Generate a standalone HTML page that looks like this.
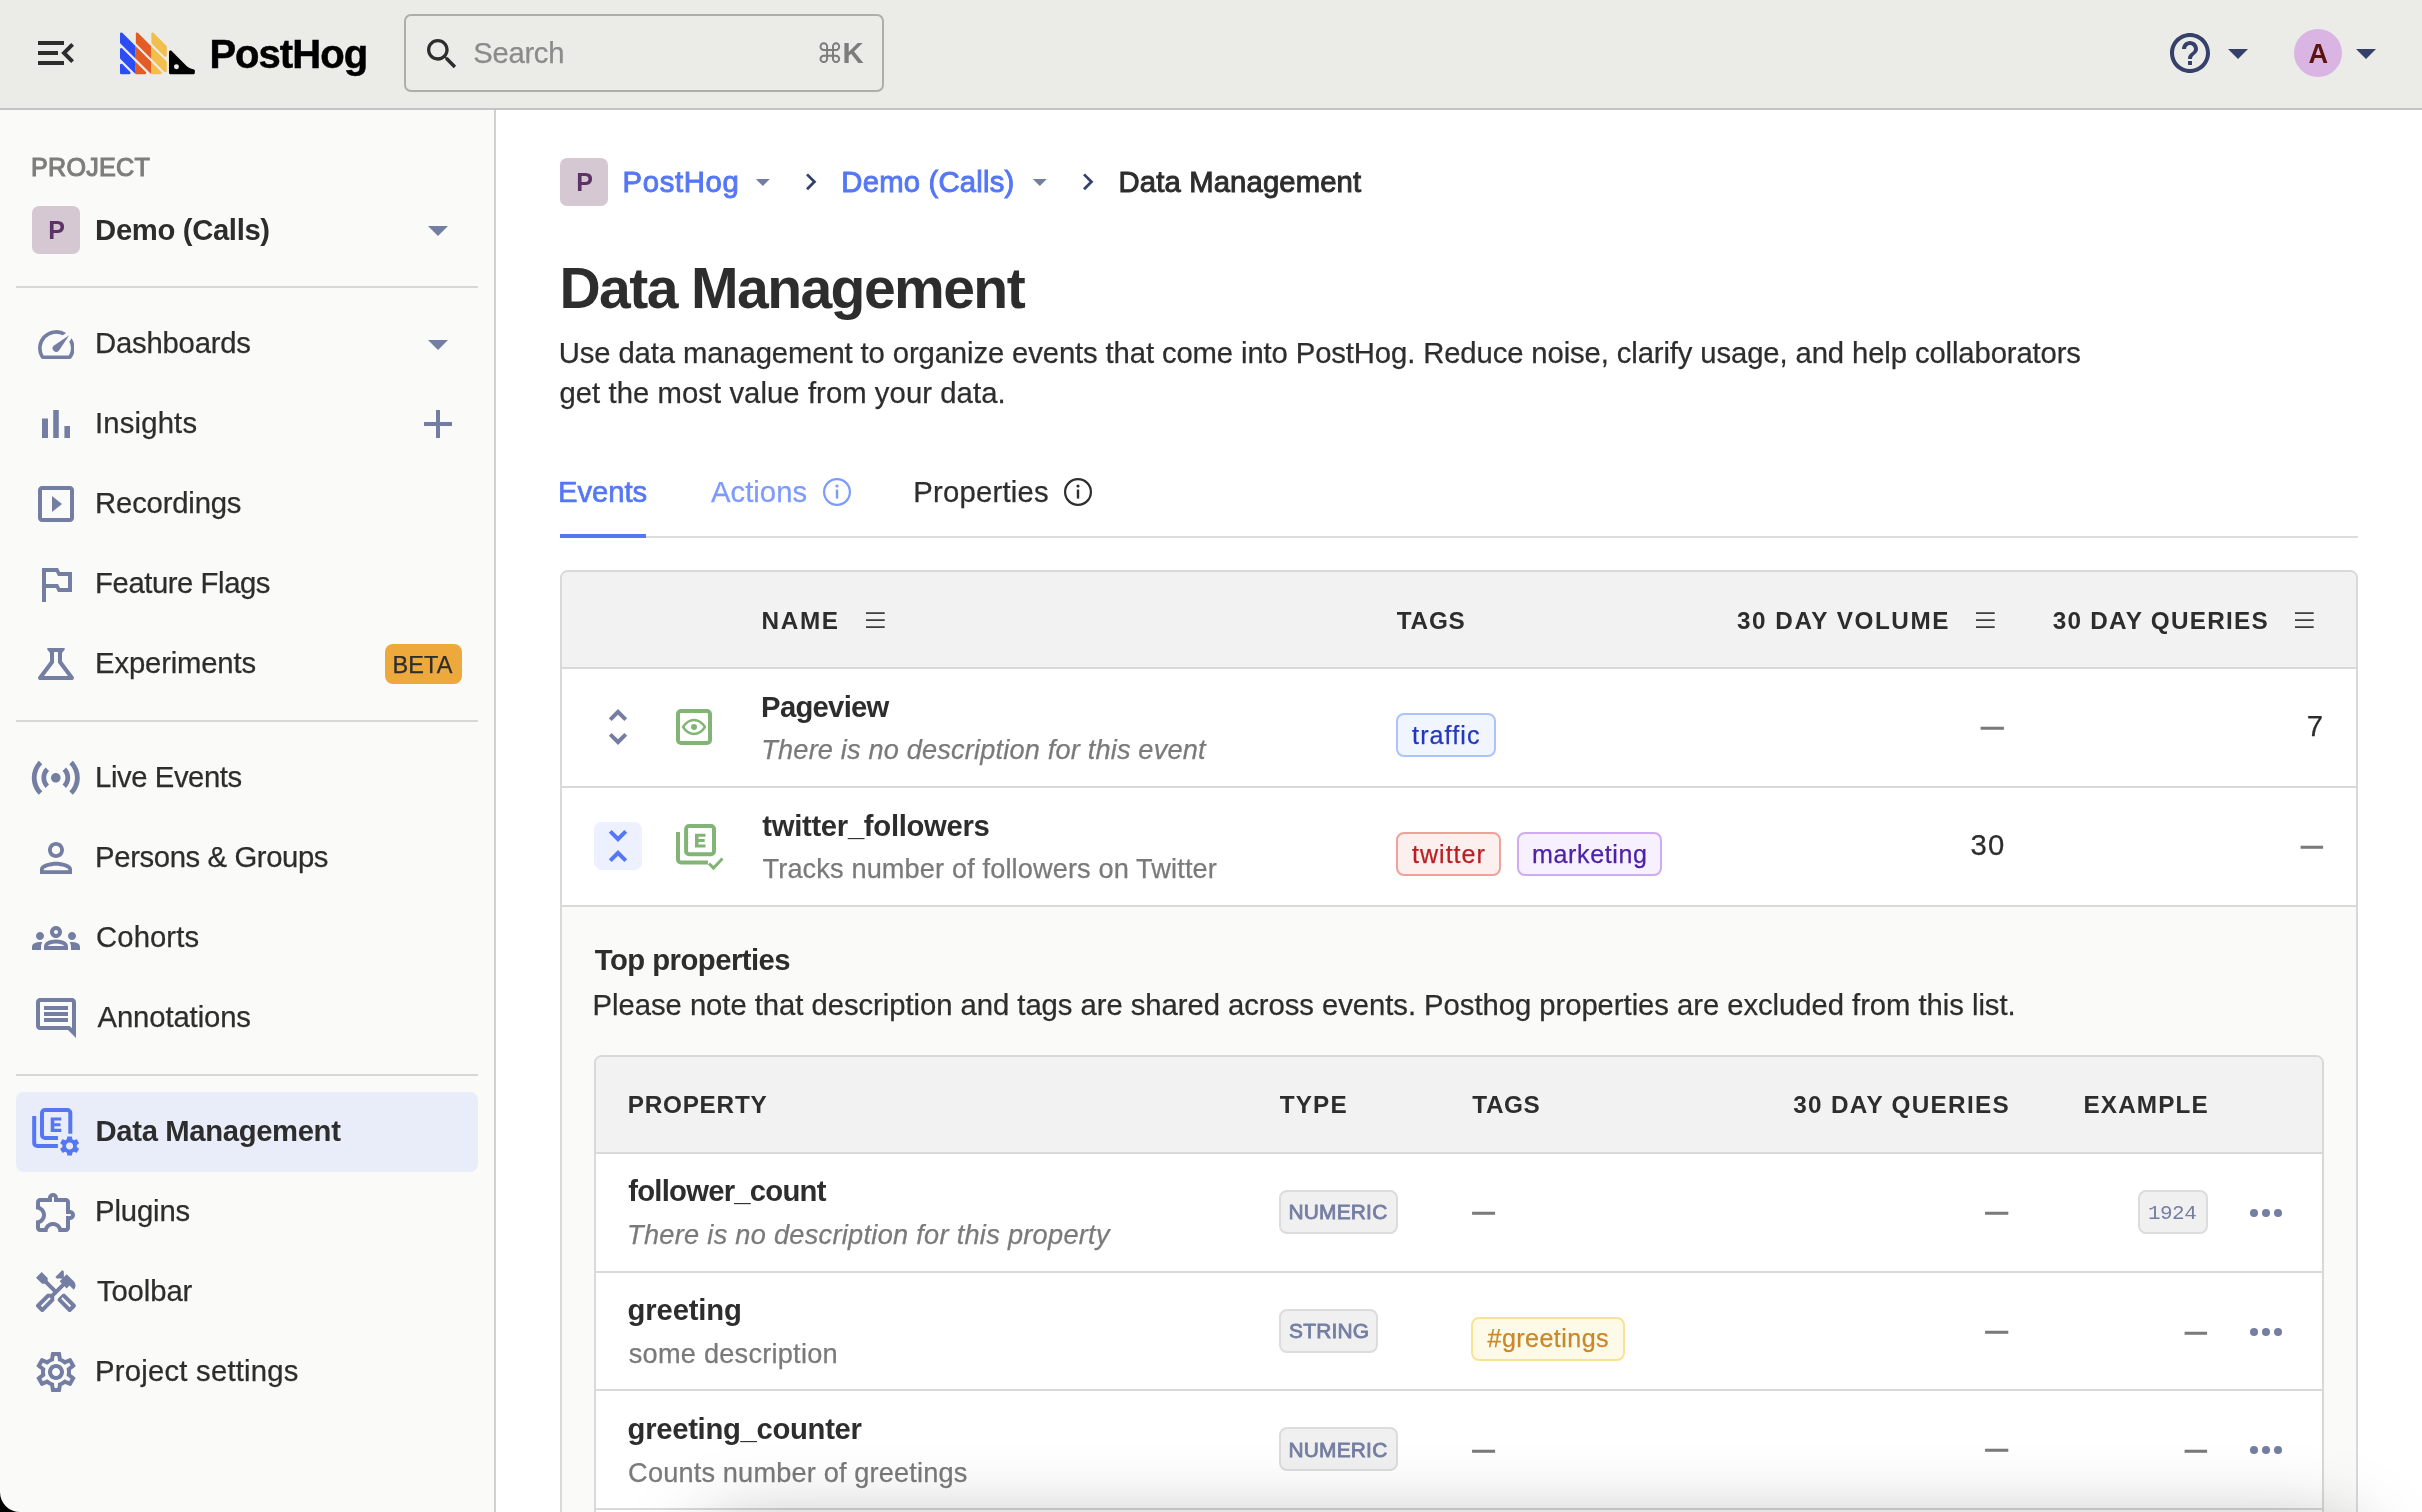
<!DOCTYPE html><html lang="en"><head><meta charset="utf-8"><title>Data Management • PostHog</title><style>*{margin:0;padding:0}html,body{width:100%;height:100%;overflow:hidden;background:#fff}
@media (max-width:1400px){#app{zoom:.5}}
body{position:relative;font-family:"Liberation Sans",sans-serif;color:#2d2d2d}
#app{position:absolute;left:0;top:0;width:2422px;height:1512px;will-change:transform}
.a{position:absolute;display:block}
.t{position:absolute;display:block;white-space:nowrap;line-height:1;font-weight:400;font-style:normal}
b.t,h1.t,h3.t{font-weight:700}</style></head><body><div id="app">
<header>
<div class="a" style="left:0px;top:0px;width:2422px;height:108px;background:#ebece8;border-bottom:2px solid #c3c4c0"></div>
<svg class="a" style="left:32px;top:29px" width="48" height="48" viewBox="0 0 24 24" fill="#2d2d2d" ><path d="M3 18h13v-2H3v2zm0-5h10v-2H3v2zm0-7v2h13V6H3zm18 9.59L17.42 12 21 8.41 19.59 7l-5 5 5 5L21 15.59z"/></svg>
<svg class="a" style="left:119.8px;top:29.06px" width="78.00" height="46.80" viewBox="0 0 50 30"><defs><clipPath id="c0"><rect x="-1" y="0" width="11" height="30"/></clipPath><clipPath id="c1"><rect x="10" y="0" width="10" height="30"/></clipPath><clipPath id="c2"><rect x="20" y="0" width="11" height="30"/></clipPath></defs><g clip-path="url(#c0)" fill="#2b4cf6" stroke="#2b4cf6" stroke-width="1.7" stroke-linejoin="round"><polygon points="20.85,3.05 29.15,11.35 29.15,16.95 20.85,8.65"/><polygon points="10.85,3.05 29.15,21.35 29.15,26.95 10.85,8.65"/><polygon points="0.85,3.05 25.95,28.15 20.35,28.15 0.85,8.65"/><polygon points="0.85,13.05 15.95,28.15 10.35,28.15 0.85,18.65"/><polygon points="0.85,23.05 5.95,28.15 0.85,28.15"/></g><g clip-path="url(#c1)" fill="#e35c26" stroke="#e35c26" stroke-width="1.7" stroke-linejoin="round"><polygon points="20.85,3.05 29.15,11.35 29.15,16.95 20.85,8.65"/><polygon points="10.85,3.05 29.15,21.35 29.15,26.95 10.85,8.65"/><polygon points="0.85,3.05 25.95,28.15 20.35,28.15 0.85,8.65"/><polygon points="0.85,13.05 15.95,28.15 10.35,28.15 0.85,18.65"/><polygon points="0.85,23.05 5.95,28.15 0.85,28.15"/></g><g clip-path="url(#c2)" fill="#f2be4d" stroke="#f2be4d" stroke-width="1.7" stroke-linejoin="round"><polygon points="20.85,3.05 29.15,11.35 29.15,16.95 20.85,8.65"/><polygon points="10.85,3.05 29.15,21.35 29.15,26.95 10.85,8.65"/><polygon points="0.85,3.05 25.95,28.15 20.35,28.15 0.85,8.65"/><polygon points="0.85,13.05 15.95,28.15 10.35,28.15 0.85,18.65"/><polygon points="0.85,23.05 5.95,28.15 0.85,28.15"/></g><path fill="#000" fill-rule="evenodd" d="M42.52 23.53L33.11 14.12C32.48 13.49 31.4 13.93 31.4 14.83V27.99C31.4 28.54 31.85 28.99 32.4 28.99H46.99C47.54 28.99 47.99 28.54 47.99 27.99V26.79C47.99 26.24 47.54 25.8 46.99 25.73C45.31 25.51 43.74 24.74 42.52 23.53ZM36.2 25.79a1.6 1.6 0 1 1 0-3.2 1.6 1.6 0 0 1 0 3.2Z"/></svg>
<span class="t" style="left:209.38px;top:34.08px;font-size:40.0px;color:#000;font-weight:700;letter-spacing:-0.958px;-webkit-text-stroke:0.5px #000;">PostHog</span>
<div class="a" style="left:404px;top:14px;width:480px;height:78px;box-sizing:border-box;border:2px solid #adaea9;border-radius:7px"></div>
<svg class="a" style="left:422px;top:33.5px" width="40" height="40" viewBox="0 0 24 24" fill="#2d2d2d" ><path d="M15.5 14h-.79l-.28-.27C15.41 12.59 16 11.11 16 9.5 16 5.91 13.09 3 9.5 3S3 5.91 3 9.5 5.91 16 9.5 16c1.61 0 3.09-.59 4.23-1.57l.27.28v.79l5 4.99L20.49 19l-4.99-5zm-6 0C7.01 14 5 11.99 5 9.5S7.01 5 9.5 5 14 7.01 14 9.5 11.99 14 9.5 14z"/></svg>
<span class="t" style="left:473.25px;top:38.68px;font-size:29.26px;color:#8b8b89;letter-spacing:-0.300px;-webkit-text-stroke:0.25px;">Search</span>
<span class="t" style="left:816.25px;top:40.45px;font-size:27.17px;color:#7c7c7a;font-family:'DejaVu Sans','Liberation Sans',sans-serif;">⌘</span>
<span class="t" style="left:842.62px;top:38.68px;font-size:29.26px;color:#7c7c7a;font-weight:700;">K</span>
<svg class="a" style="left:2166px;top:29px" width="48" height="48" viewBox="0 0 24 24" fill="#35416b" ><path d="M11 18h2v-2h-2v2zm1-16C6.48 2 2 6.48 2 12s4.48 10 10 10 10-4.48 10-10S17.52 2 12 2zm0 18c-4.41 0-8-3.59-8-8s3.59-8 8-8 8 3.59 8 8-3.59 8-8 8zm0-14c-2.21 0-4 1.79-4 4h2c0-1.1.9-2 2-2s2 .9 2 2c0 2-3 1.75-3 5h2c0-2.25 3-2.5 3-5 0-2.21-1.79-4-4-4z"/></svg>
<svg class="a" style="left:2214px;top:29px" width="48" height="48" viewBox="0 0 24 24" fill="#35416b" ><path d="M7 10l5 5 5-5z"/></svg>
<div class="a" style="left:2294px;top:29px;width:48px;height:48px;border-radius:50%;background:#dab4e3"></div>
<span class="t" style="left:2308.38px;top:39.95px;font-size:27.17px;color:#5a140c;font-weight:700;">A</span>
<svg class="a" style="left:2342px;top:29px" width="48" height="48" viewBox="0 0 24 24" fill="#35416b" ><path d="M7 10l5 5 5-5z"/></svg>
</header>
<nav>
<div class="a" style="left:0px;top:110px;width:494px;height:1402px;background:#fafaf9;border-right:2px solid #d0d0cf"></div>
<span class="t" style="left:31.00px;top:154.71px;font-size:25.08px;color:#7d7d7d;letter-spacing:0.292px;-webkit-text-stroke:1.1px #7d7d7d;">PROJECT</span>
<div class="a" style="left:32px;top:206px;width:48px;height:48px;border-radius:7px;background:#d5c8d3"></div>
<span class="t" style="left:48.27px;top:218.18px;font-size:25.0px;color:#5c3269;font-weight:700;">P</span>
<span class="t" style="left:95.12px;top:215.68px;font-size:29.26px;color:#2d2d2d;font-weight:700;letter-spacing:-0.345px;">Demo (Calls)</span>
<svg class="a" style="left:414px;top:206px" width="48" height="48" viewBox="0 0 24 24" fill="#747ea2" ><path d="M7 10l5 5 5-5z"/></svg>
<div class="a" style="left:16px;top:286px;width:462px;height:2px;background:#d7d7d6"></div>
<svg class="a" style="left:37.5px;top:329.5px" width="36.5" height="29.2" viewBox="2 4 20 16" preserveAspectRatio="none" fill="#747ea2"><path d="M20.38 8.57l-1.23 1.85a8 8 0 0 1-.22 7.58H5.07A8 8 0 0 1 15.58 6.85l1.85-1.23A10 10 0 0 0 3.35 19a2 2 0 0 0 1.72 1h13.85a2 2 0 0 0 1.74-1 10 10 0 0 0-.27-10.44zm-9.79 6.84a2 2 0 0 0 2.83 0l5.66-8.49-8.49 5.66a2 2 0 0 0 0 2.83z"/></svg>
<span class="t" style="left:95.12px;top:328.98px;font-size:29.26px;color:#2d2d2d;letter-spacing:-0.208px;-webkit-text-stroke:0.25px;">Dashboards</span>
<svg class="a" style="left:414px;top:320px" width="48" height="48" viewBox="0 0 24 24" fill="#747ea2" ><path d="M7 10l5 5 5-5z"/></svg>
<svg class="a" style="left:32px;top:400px" width="48" height="48" viewBox="0 0 24 24" fill="#747ea2" ><path d="M5 9.2h3V19H5zM10.6 5h2.8v14h-2.8zm5.6 8H19v6h-2.8z"/></svg>
<span class="t" style="left:94.88px;top:408.98px;font-size:29.26px;color:#2d2d2d;letter-spacing:0.196px;-webkit-text-stroke:0.25px;">Insights</span>
<svg class="a" style="left:414px;top:400px" width="48" height="48" viewBox="0 0 24 24" fill="#747ea2" ><path d="M19 13h-6v6h-2v-6H5v-2h6V5h2v6h6v2z"/></svg>
<svg class="a" style="left:32px;top:480px" width="48" height="48" viewBox="0 0 24 24" fill="#747ea2" ><path d="M10 8v8l5-4-5-4zm9-5H5c-1.1 0-2 .9-2 2v14c0 1.1.9 2 2 2h14c1.1 0 2-.9 2-2V5c0-1.1-.9-2-2-2zm0 16H5V5h14v14z"/></svg>
<span class="t" style="left:95.12px;top:488.98px;font-size:29.26px;color:#2d2d2d;letter-spacing:-0.181px;-webkit-text-stroke:0.25px;">Recordings</span>
<svg class="a" style="left:32px;top:560px" width="48" height="48" viewBox="0 0 24 24" fill="#747ea2" ><path d="M14 6l-1-2H5v17h2v-7h5l1 2h7V6h-6zm4 8h-4l-1-2H7V6h5l1 2h5v6z"/></svg>
<span class="t" style="left:95.12px;top:568.98px;font-size:29.26px;color:#2d2d2d;letter-spacing:-0.427px;-webkit-text-stroke:0.25px;">Feature Flags</span>
<svg class="a" style="left:32px;top:640px" width="48" height="48" viewBox="0 0 24 24" fill="#747ea2" ><path d="M13 11.33L18 18H6l5-6.67V6h2m2.96-2H8.04c-.42 0-.65.48-.39.81L9 6.5v4.17L3.2 18.4c-.49.66-.02 1.6.8 1.6h16c.82 0 1.29-.94.8-1.6L15 10.67V6.5l1.35-1.69c.26-.33.03-.81-.39-.81z"/></svg>
<span class="t" style="left:95.12px;top:648.98px;font-size:29.26px;color:#2d2d2d;letter-spacing:-0.163px;-webkit-text-stroke:0.25px;">Experiments</span>
<div class="a" style="left:385px;top:644px;width:77px;height:40px;border-radius:8px;background:#eea93c"></div>
<span class="t" style="left:392.62px;top:653.54px;font-size:23.51px;color:#2d2d2d;letter-spacing:0.083px;-webkit-text-stroke:0.25px;">BETA</span>
<div class="a" style="left:16px;top:720px;width:462px;height:2px;background:#d7d7d6"></div>
<svg class="a" style="left:27.2px;top:748.7px" width="57.6" height="57.6" viewBox="0 0 24 24" fill="#747ea2"><path d="M7.76 16.24C6.67 15.16 6 13.66 6 12s.67-3.16 1.76-4.24l1.42 1.42C8.45 9.9 8 10.9 8 12c0 1.1.45 2.1 1.17 2.83l-1.41 1.41zm8.48 0C17.33 15.16 18 13.66 18 12s-.67-3.16-1.76-4.24l-1.42 1.42C15.55 9.9 16 10.9 16 12c0 1.1-.45 2.1-1.17 2.83l1.41 1.41zM12 10c-1.1 0-2 .9-2 2s.9 2 2 2 2-.9 2-2-.9-2-2-2zm8 2c0 2.21-.9 4.21-2.35 5.65l1.42 1.42C20.88 17.26 22 14.76 22 12s-1.12-5.26-2.93-7.07l-1.42 1.42C19.1 7.79 20 9.79 20 12zM6.35 6.35L4.93 4.93C3.12 6.74 2 9.24 2 12s1.12 5.26 2.93 7.07l1.42-1.42C4.9 16.21 4 14.21 4 12s.9-4.21 2.35-5.65z"/></svg>
<span class="t" style="left:95.12px;top:762.98px;font-size:29.26px;color:#2d2d2d;letter-spacing:-0.418px;-webkit-text-stroke:0.25px;">Live Events</span>
<svg class="a" style="left:32px;top:834px" width="48" height="48" viewBox="0 0 24 24" fill="#747ea2" ><path d="M12 5.9c1.16 0 2.1.94 2.1 2.1s-.94 2.1-2.1 2.1S9.9 9.16 9.9 8s.94-2.1 2.1-2.1M12 4C9.79 4 8 5.790 8 8s1.790 4 4 4 4-1.790 4-4-1.790-4-4-4z"/><path fill-rule="evenodd" d="M12 13.850c-2.670 0-8 1.200-8 3.650V20h16v-2.500c0-2.450-5.330-3.650-8-3.650zm0 2.050c2.970 0 6.100 1.200 6.100 1.750v.450H5.900v-.450c0-.550 3.130-1.750 6.100-1.750z"/></svg>
<span class="t" style="left:95.12px;top:842.98px;font-size:29.26px;color:#2d2d2d;letter-spacing:-0.375px;-webkit-text-stroke:0.25px;">Persons &amp; Groups</span>
<svg class="a" style="left:32px;top:914px" width="48" height="48" viewBox="0 0 24 24" fill="#747ea2" ><path d="M4 13c1.1 0 2-.9 2-2s-.9-2-2-2-2 .9-2 2 .9 2 2 2zm1.13 1.1c-.37-.06-.74-.1-1.13-.1-.99 0-1.93.21-2.78.58C.48 14.9 0 15.62 0 16.43V18h4.5v-1.61c0-.83.23-1.61.63-2.29zM20 13c1.1 0 2-.9 2-2s-.9-2-2-2-2 .9-2 2 .9 2 2 2zm4 3.43c0-.81-.48-1.53-1.22-1.85-.85-.37-1.79-.58-2.78-.58-.39 0-.76.04-1.13.1.4.68.63 1.46.63 2.29V18H24v-1.57zm-7.76-2.78c-1.17-.52-2.61-.9-4.24-.9-1.63 0-3.07.39-4.24.9C6.68 14.13 6 15.21 6 16.39V18h12v-1.61c0-1.18-.68-2.26-1.76-2.74zM8.07 16c.09-.23.13-.39.91-.69.97-.38 1.99-.56 3.02-.56s2.05.18 3.02.56c.77.3.81.46.91.69H8.07zM12 8c.55 0 1 .45 1 1s-.45 1-1 1-1-.45-1-1 .45-1 1-1m0-2c-1.66 0-3 1.34-3 3s1.34 3 3 3 3-1.34 3-3-1.34-3-3-3z"/></svg>
<span class="t" style="left:96.12px;top:922.98px;font-size:29.26px;color:#2d2d2d;letter-spacing:0.083px;-webkit-text-stroke:0.25px;">Cohorts</span>
<svg class="a" style="left:32px;top:994px" width="48" height="48" viewBox="0 0 24 24" fill="#747ea2" ><path d="M21.99 4c0-1.1-.89-2-1.99-2H4c-1.1 0-2 .9-2 2v12c0 1.1.9 2 2 2h14l4 4-.01-18zM20 4v13.17L18.83 16H4V4h16zM6 12h12v2H6zm0-3h12v2H6zm0-3h12v2H6z"/></svg>
<span class="t" style="left:97.50px;top:1002.98px;font-size:29.26px;color:#2d2d2d;letter-spacing:-0.100px;-webkit-text-stroke:0.25px;">Annotations</span>
<div class="a" style="left:16px;top:1074px;width:462px;height:2px;background:#d7d7d6"></div>
<div class="a" style="left:16px;top:1092px;width:462px;height:80px;border-radius:8px;background:#e9edfa"></div>
<svg class="a" style="left:30px;top:1106px" width="52" height="52" viewBox="0 0 52 52" fill="none"><path d="M28 32H15a3 3 0 0 1-3-3V7a3 3 0 0 1 3-3H37.300a3 3 0 0 1 3 3V27.800" stroke="#5577f5" stroke-width="4"/><path d="M4.200 10.100V36.900a3 3 0 0 0 3 3H27.900" stroke="#5577f5" stroke-width="4"/><path d="M20.700 11.400h10.600v3.200h-7v2.600h6.200v3h-6.200v2.600h7v3.200h-10.600z" fill="#5577f5"/><g transform="translate(27.600,28)"><path d="M19.14 12.94c.04-.3.06-.61.06-.94 0-.32-.02-.64-.07-.94l2.03-1.58c.18-.14.23-.41.12-.61l-1.92-3.32c-.12-.22-.37-.29-.59-.22l-2.39.96c-.5-.38-1.03-.7-1.62-.94l-.36-2.54c-.04-.24-.24-.41-.48-.41h-3.84c-.24 0-.43.17-.47.41l-.36 2.54c-.59.24-1.13.57-1.62.94l-2.39-.96c-.22-.08-.47 0-.59.22L2.74 8.87c-.12.21-.08.47.12.61l2.03 1.58c-.05.3-.09.63-.09.94s.02.64.07.94l-2.03 1.58c-.18.14-.23.41-.12.61l1.92 3.32c.12.22.37.29.59.22l2.39-.96c.5.38 1.03.7 1.62.94l.36 2.54c.05.24.24.41.48.41h3.84c.24 0 .44-.17.47-.41l.36-2.54c.59-.24 1.13-.56 1.62-.94l2.39.96c.22.08.47 0 .59-.22l1.92-3.32c.12-.22.07-.47-.12-.61l-2.01-1.58zM12 15.6c-1.98 0-3.6-1.62-3.6-3.6s1.62-3.6 3.6-3.6 3.6 1.62 3.6 3.6-1.62 3.6-3.6 3.6z" fill="#5577f5"/></g></svg>
<span class="t" style="left:95.62px;top:1116.98px;font-size:29.26px;color:#2d2d2d;font-weight:700;letter-spacing:-0.361px;">Data Management</span>
<svg class="a" style="left:32px;top:1188px" width="48" height="48" viewBox="0 0 24 24" fill="#747ea2" ><path d="M10.5 4.5c.28 0 .5.22.5.5v2h6v6h2c.28 0 .5.22.5.5s-.22.5-.5.5h-2v6h-2.12c-.68-1.75-2.39-3-4.38-3s-3.7 1.25-4.38 3H4v-2.12c1.75-.68 3-2.39 3-4.38 0-1.99-1.24-3.7-2.99-4.38L4 7h6V5c0-.28.22-.5.5-.5m0-2C9.12 2.5 8 3.62 8 5H4c-1.1 0-1.99.9-1.99 2v3.8h.29c1.49 0 2.7 1.21 2.7 2.7s-1.21 2.7-2.7 2.7H2V20c0 1.1.9 2 2 2h3.8v-.3c0-1.49 1.21-2.7 2.7-2.7s2.7 1.21 2.7 2.7v.3H17c1.1 0 2-.9 2-2v-4c1.38 0 2.5-1.12 2.5-2.5S20.38 11 19 11V7c0-1.1-.9-2-2-2h-4c0-1.38-1.12-2.5-2.5-2.5z"/></svg>
<span class="t" style="left:95.12px;top:1196.98px;font-size:29.26px;color:#2d2d2d;letter-spacing:-0.133px;-webkit-text-stroke:0.25px;">Plugins</span>
<svg class="a" style="left:32px;top:1268px" width="48" height="48" viewBox="0 0 24 24" fill="#747ea2" ><path d="M21.67 18.17l-5.3-5.3h-.99l-2.54 2.54v.99l5.3 5.3c.39.39 1.02.39 1.41 0l2.12-2.12c.39-.38.39-1.02 0-1.41zm-2.83 1.42l-4.24-4.24.71-.71 4.24 4.24-.71.71z"/><path d="M17.34 10.19l1.41-1.41 2.12 2.12c1.17-1.17 1.17-3.07 0-4.24l-3.54-3.54-1.41 1.41V1.71l-.7-.71-3.54 3.54.71.71h2.83l-1.41 1.41 1.06 1.06-2.89 2.89-4.13-4.13V5.06L4.83 2.04 2 4.87 5.03 7.9h1.41l4.13 4.13-.85.85H7.6l-5.3 5.3c-.39.39-.39 1.02 0 1.41l2.12 2.12c.39.39 1.02.39 1.41 0l5.3-5.3v-2.12l5.15-5.15 1.06 1.05zm-7.98 5.15l-4.24 4.24-.71-.71 4.24-4.24.71.71z"/></svg>
<span class="t" style="left:96.88px;top:1276.98px;font-size:29.26px;color:#2d2d2d;letter-spacing:-0.083px;-webkit-text-stroke:0.25px;">Toolbar</span>
<svg class="a" style="left:32px;top:1348px" width="48" height="48" viewBox="0 0 24 24" fill="#747ea2" ><path d="M19.43 12.98c.04-.32.07-.64.07-.98 0-.34-.03-.66-.07-.98l2.11-1.65c.19-.15.24-.42.12-.64l-2-3.46c-.09-.16-.26-.25-.44-.25-.06 0-.12.01-.17.03l-2.49 1c-.52-.4-1.08-.73-1.69-.98l-.38-2.65C14.46 2.18 14.25 2 14 2h-4c-.25 0-.46.18-.49.42l-.38 2.65c-.61.25-1.17.59-1.69.98l-2.49-1c-.06-.02-.12-.03-.18-.03-.17 0-.34.09-.43.25l-2 3.46c-.13.22-.07.49.12.64l2.11 1.65c-.04.32-.07.65-.07.98 0 .33.03.66.07.98l-2.11 1.65c-.19.15-.24.42-.12.64l2 3.46c.09.16.26.25.44.25.06 0 .12-.01.17-.03l2.49-1c.52.4 1.08.73 1.69.98l.38 2.65c.03.24.24.42.49.42h4c.25 0 .46-.18.49-.42l.38-2.65c.61-.25 1.17-.59 1.69-.98l2.49 1c.06.02.12.03.18.03.17 0 .34-.09.43-.25l2-3.46c.12-.22.07-.49-.12-.64l-2.11-1.65zm-1.98-1.71c.04.31.05.52.05.73 0 .21-.02.43-.05.73l-.14 1.13.89.7 1.08.84-.7 1.21-1.27-.51-1.04-.42-.9.68c-.43.32-.84.56-1.25.73l-1.06.43-.16 1.13-.2 1.35h-1.4l-.19-1.35-.16-1.13-1.06-.43c-.43-.18-.83-.41-1.23-.71l-.91-.7-1.06.43-1.27.51-.7-1.21 1.08-.84.89-.7-.14-1.13c-.03-.31-.05-.54-.05-.74s.02-.43.05-.73l.14-1.13-.89-.7-1.08-.84.7-1.21 1.27.51 1.04.42.9-.68c.43-.32.84-.56 1.25-.73l1.06-.43.16-1.13.2-1.35h1.39l.19 1.35.16 1.13 1.06.43c.43.18.83.41 1.23.71l.91.7 1.06-.43 1.27-.51.7 1.21-1.07.85-.89.7.14 1.13zM12 8c-2.21 0-4 1.79-4 4s1.79 4 4 4 4-1.79 4-4-1.79-4-4-4zm0 6c-1.1 0-2-.9-2-2s.9-2 2-2 2 .9 2 2-.9 2-2 2z"/></svg>
<span class="t" style="left:95.12px;top:1356.98px;font-size:29.26px;color:#2d2d2d;letter-spacing:0.225px;-webkit-text-stroke:0.25px;">Project settings</span>
</nav>
<main>
<div class="a" style="left:560px;top:158px;width:48px;height:48px;border-radius:7px;background:#d5c8d3"></div>
<span class="t" style="left:576.27px;top:170.18px;font-size:25.0px;color:#5c3269;font-weight:700;">P</span>
<span class="t" style="left:622.62px;top:168.18px;font-size:29.26px;color:#5577f5;letter-spacing:0.667px;-webkit-text-stroke:0.95px #5577f5;">PostHog</span>
<svg class="a" style="left:745.7px;top:165px" width="33.6" height="33.6" viewBox="0 0 24 24" fill="#747ea2" ><path d="M7 10l5 5 5-5z"/></svg>
<svg class="a" style="left:793.5px;top:165.2px" width="33.6" height="33.6" viewBox="0 0 24 24" fill="#35416b" ><path d="M8.59 16.59L13.17 12 8.59 7.41 10 6l6 6-6 6-1.41-1.41z"/></svg>
<span class="t" style="left:841.33px;top:168.18px;font-size:29.26px;color:#5577f5;letter-spacing:0.209px;-webkit-text-stroke:0.95px #5577f5;">Demo (Calls)</span>
<svg class="a" style="left:1022.7px;top:165px" width="33.6" height="33.6" viewBox="0 0 24 24" fill="#747ea2" ><path d="M7 10l5 5 5-5z"/></svg>
<svg class="a" style="left:1070.5px;top:165.2px" width="33.6" height="33.6" viewBox="0 0 24 24" fill="#35416b" ><path d="M8.59 16.59L13.17 12 8.59 7.41 10 6l6 6-6 6-1.41-1.41z"/></svg>
<span class="t" style="left:1118.62px;top:168.18px;font-size:29.26px;color:#2d2d2d;letter-spacing:0.134px;-webkit-text-stroke:0.95px #2d2d2d;">Data Management</span>
<h1 class="t" style="left:559.45px;top:260.09px;font-size:57.12px;color:#2d2d2d;font-weight:700;letter-spacing:-1.607px;">Data Management</h1>
<p class="t" style="left:558.75px;top:339.38px;font-size:29.26px;color:#2d2d2d;letter-spacing:-0.112px;-webkit-text-stroke:0.25px;">Use data management to organize events that come into PostHog. Reduce noise, clarify usage, and help collaborators</p>
<p class="t" style="left:559.38px;top:379.38px;font-size:29.26px;color:#2d2d2d;letter-spacing:0.072px;-webkit-text-stroke:0.25px;">get the most value from your data.</p>
<div class="a" style="left:560px;top:536px;width:1798px;height:2px;background:#dcdcdc"></div>
<span class="t" style="left:558.12px;top:477.68px;font-size:29.26px;color:#5577f5;letter-spacing:-0.100px;-webkit-text-stroke:0.7px #5577f5;">Events</span>
<div class="a" style="left:560px;top:534px;width:86px;height:4px;background:#5577f5"></div>
<span class="t" style="left:711.00px;top:477.68px;font-size:29.26px;color:#7d9aff;letter-spacing:0.021px;-webkit-text-stroke:0.25px;">Actions</span>
<svg class="a" style="left:821px;top:476px" width="32" height="32" viewBox="0 0 32 32" fill="none"><circle cx="16" cy="16" r="12.9" stroke="#7d9aff" stroke-width="2.2"/><rect x="14.8" y="13.6" width="2.4" height="9" fill="#7d9aff"/><circle cx="16" cy="10" r="1.6" fill="#7d9aff"/></svg>
<span class="t" style="left:913.33px;top:477.68px;font-size:29.26px;color:#2d2d2d;letter-spacing:0.214px;-webkit-text-stroke:0.25px;">Properties</span>
<svg class="a" style="left:1062px;top:476px" width="32" height="32" viewBox="0 0 32 32" fill="none"><circle cx="16" cy="16" r="12.9" stroke="#2d2d2d" stroke-width="2.2"/><rect x="14.8" y="13.6" width="2.4" height="9" fill="#2d2d2d"/><circle cx="16" cy="10" r="1.6" fill="#2d2d2d"/></svg>
<section>
<div class="a" style="left:560px;top:570px;width:1798px;height:960px;box-sizing:border-box;border:2px solid #d9d9d9;border-radius:8px;background:#fafaf9"></div>
<div class="a" style="left:562px;top:572px;width:1794px;height:95px;background:#f2f2f2;border-radius:6px 6px 0 0"></div>
<div class="a" style="left:562px;top:667px;width:1794px;height:2px;background:#d9d9d9"></div>
<div class="a" style="left:562px;top:669px;width:1794px;height:117px;background:#fff"></div>
<div class="a" style="left:562px;top:786px;width:1794px;height:2px;background:#d9d9d9"></div>
<div class="a" style="left:562px;top:788px;width:1794px;height:117px;background:#fff"></div>
<div class="a" style="left:562px;top:905px;width:1794px;height:2px;background:#d9d9d9"></div>
<b class="t" style="left:761.50px;top:608.58px;font-size:24.3px;color:#2d2d2d;font-weight:700;letter-spacing:1.667px;">NAME</b>
<svg class="a" style="left:865.7px;top:611.3px" width="19" height="18" viewBox="0 0 19 18" fill="#2d2d2d"><rect x="0" y="1.3" width="18.7" height="1.6"/><rect x="0" y="8.3" width="18.7" height="1.6"/><rect x="0" y="15.3" width="18.7" height="1.6"/></svg>
<b class="t" style="left:1396.75px;top:608.58px;font-size:24.3px;color:#2d2d2d;font-weight:700;letter-spacing:0.775px;">TAGS</b>
<b class="t" style="left:1737.00px;top:608.58px;font-size:24.3px;color:#2d2d2d;font-weight:700;letter-spacing:1.521px;">30 DAY VOLUME</b>
<svg class="a" style="left:1976px;top:611.3px" width="19" height="18" viewBox="0 0 19 18" fill="#2d2d2d"><rect x="0" y="1.3" width="18.7" height="1.6"/><rect x="0" y="8.3" width="18.7" height="1.6"/><rect x="0" y="15.3" width="18.7" height="1.6"/></svg>
<b class="t" style="left:2052.70px;top:608.58px;font-size:24.3px;color:#2d2d2d;font-weight:700;letter-spacing:1.273px;">30 DAY QUERIES</b>
<svg class="a" style="left:2294.5px;top:611.3px" width="19" height="18" viewBox="0 0 19 18" fill="#2d2d2d"><rect x="0" y="1.3" width="18.7" height="1.6"/><rect x="0" y="8.3" width="18.7" height="1.6"/><rect x="0" y="15.3" width="18.7" height="1.6"/></svg>
<svg class="a" style="left:594px;top:702.7px" width="48" height="48" viewBox="0 0 24 24" fill="#747ea2" ><path d="M12 5.83L15.17 9l1.41-1.41L12 3 7.41 7.59 8.83 9 12 5.83zm0 12.34L8.83 15l-1.41 1.41L12 21l4.59-4.59L15.17 15 12 18.17z"/></svg>
<svg class="a" style="left:670px;top:703px" width="48" height="48" viewBox="0 0 48 48" fill="none"><rect x="8" y="8" width="32" height="32" rx="3" stroke="#82b575" stroke-width="4"/><path d="M13 24C16.500 18.700 20 17 24 17S31.500 18.700 35 24C31.500 29.300 28 31 24 31S16.500 29.300 13 24Z" stroke="#82b575" stroke-width="2.400" stroke-linejoin="round"/><circle cx="24" cy="24" r="3" fill="#82b575"/></svg>
<span class="t" style="left:761.12px;top:692.68px;font-size:29.26px;color:#2d2d2d;font-weight:700;letter-spacing:-0.732px;">Pageview</span>
<span class="t" style="left:761.33px;top:736.15px;font-size:27.17px;color:#7a7a7a;font-style:italic;letter-spacing:0.174px;-webkit-text-stroke:0.25px;">There is no description for this event</span>
<div class="a" style="left:1396px;top:713px;width:100px;height:44px;box-sizing:border-box;border:2px solid #abc4fa;border-radius:8px;background:#f0f5fe"></div>
<span class="t" style="left:1412.12px;top:722.91px;font-size:25.08px;color:#2438bd;letter-spacing:1.083px;-webkit-text-stroke:0.25px;">traffic</span>
<span class="t" style="left:1981.35px;top:716.47px;font-size:22.0px;color:#7a7a7a;-webkit-text-stroke:1.3px #7a7a7a;">—</span>
<span class="t" style="left:2306.80px;top:712.18px;font-size:29.26px;color:#2d2d2d;-webkit-text-stroke:0.25px;">7</span>
<div class="a" style="left:594px;top:822px;width:48px;height:48px;border-radius:8px;background:#edf0ff"></div>
<svg class="a" style="left:594px;top:822px" width="48" height="48" viewBox="0 0 24 24" fill="#5577f5" ><path d="M7.41 18.59L8.83 20 12 16.83 15.17 20l1.41-1.41L12 14l-4.59 4.59zm9.18-13.18L15.17 4 12 7.17 8.83 4 7.41 5.41 12 10l4.59-4.59z"/></svg>
<svg class="a" style="left:672px;top:820px" width="56" height="56" viewBox="0 0 56 56" fill="none"><rect x="14.100" y="6" width="27.900" height="28.200" rx="3" stroke="#82b575" stroke-width="4"/><path d="M6 12V39.500a3 3 0 0 0 3 3h27" stroke="#82b575" stroke-width="4"/><path d="M23 13.700h10.500v3h-7v2.400h6.200v2.900h-6.200v2.500h7v3H23z" fill="#82b575"/><path d="M37 43.500l4.500 4.500 9-9.500" stroke="#82b575" stroke-width="3"/></svg>
<span class="t" style="left:762.25px;top:811.68px;font-size:29.26px;color:#2d2d2d;font-weight:700;letter-spacing:-0.300px;">twitter_followers</span>
<span class="t" style="left:762.50px;top:855.45px;font-size:27.17px;color:#7a7a7a;letter-spacing:0.128px;-webkit-text-stroke:0.25px;">Tracks number of followers on Twitter</span>
<div class="a" style="left:1396px;top:832px;width:104.5px;height:44px;box-sizing:border-box;border:2px solid #f0a19a;border-radius:8px;background:#fcf0ee"></div>
<span class="t" style="left:1412.12px;top:841.71px;font-size:25.08px;color:#bb1f24;letter-spacing:0.958px;-webkit-text-stroke:0.25px;">twitter</span>
<div class="a" style="left:1517px;top:832px;width:145px;height:44px;box-sizing:border-box;border:2px solid #ceabf2;border-radius:8px;background:#f7f0fe"></div>
<span class="t" style="left:1532.08px;top:841.71px;font-size:25.08px;color:#4d22a6;letter-spacing:0.584px;-webkit-text-stroke:0.25px;">marketing</span>
<span class="t" style="left:1970.50px;top:831.18px;font-size:29.26px;color:#2d2d2d;letter-spacing:1.325px;-webkit-text-stroke:0.25px;">30</span>
<span class="t" style="left:2301.35px;top:835.05px;font-size:21.2px;color:#7a7a7a;-webkit-text-stroke:1.3px #7a7a7a;">—</span>
<h3 class="t" style="left:594.75px;top:946.38px;font-size:29.26px;color:#2d2d2d;font-weight:700;letter-spacing:-0.519px;">Top properties</h3>
<p class="t" style="left:592.62px;top:991.18px;font-size:29.26px;color:#2d2d2d;letter-spacing:-0.041px;-webkit-text-stroke:0.25px;">Please note that description and tags are shared across events. Posthog properties are excluded from this list.</p>
<div class="a" style="left:594px;top:1055px;width:1730px;height:470px;box-sizing:border-box;border:2px solid #d9d9d9;border-radius:8px;background:#fff"></div>
<div class="a" style="left:596px;top:1057px;width:1726px;height:95px;background:#f2f2f2;border-radius:6px 6px 0 0"></div>
<div class="a" style="left:596px;top:1151.5px;width:1726px;height:2px;background:#d9d9d9"></div>
<div class="a" style="left:596px;top:1270.5px;width:1726px;height:2px;background:#d9d9d9"></div>
<div class="a" style="left:596px;top:1389px;width:1726px;height:2px;background:#d9d9d9"></div>
<div class="a" style="left:596px;top:1508px;width:1726px;height:2px;background:#d9d9d9"></div>
<b class="t" style="left:627.70px;top:1092.88px;font-size:24.3px;color:#2d2d2d;font-weight:700;letter-spacing:0.768px;">PROPERTY</b>
<b class="t" style="left:1279.75px;top:1092.88px;font-size:24.3px;color:#2d2d2d;font-weight:700;letter-spacing:1.125px;">TYPE</b>
<b class="t" style="left:1472.25px;top:1092.88px;font-size:24.3px;color:#2d2d2d;font-weight:700;letter-spacing:0.608px;">TAGS</b>
<b class="t" style="left:1793.20px;top:1092.88px;font-size:24.3px;color:#2d2d2d;font-weight:700;letter-spacing:1.312px;">30 DAY QUERIES</b>
<b class="t" style="left:2083.50px;top:1092.88px;font-size:24.3px;color:#2d2d2d;font-weight:700;letter-spacing:1.125px;">EXAMPLE</b>
<span class="t" style="left:628.20px;top:1177.38px;font-size:29.26px;color:#2d2d2d;font-weight:700;letter-spacing:-0.750px;">follower_count</span>
<span class="t" style="left:627.12px;top:1221.25px;font-size:27.17px;color:#7a7a7a;font-style:italic;letter-spacing:0.287px;-webkit-text-stroke:0.25px;">There is no description for this property</span>
<div class="a" style="left:1279px;top:1190px;width:119px;height:44px;box-sizing:border-box;border:2px solid #dcdcdc;border-radius:8px;background:#f0f0f0"></div>
<span class="t" style="left:1288.38px;top:1202.25px;font-size:20.9px;color:#747ea2;letter-spacing:0.229px;-webkit-text-stroke:0.8px #747ea2;">NUMERIC</span>
<span class="t" style="left:1985.65px;top:1200.96px;font-size:21.9px;color:#7a7a7a;-webkit-text-stroke:1.3px #7a7a7a;">—</span>
<svg class="a" style="left:2242px;top:1188.5px" width="48" height="48" viewBox="0 0 24 24" fill="#747ea2" ><circle cx="6" cy="12" r="2"/><circle cx="12" cy="12" r="2"/><circle cx="18" cy="12" r="2"/></svg>
<span class="t" style="left:1472.65px;top:1201.13px;font-size:21.7px;color:#7a7a7a;-webkit-text-stroke:1.3px #7a7a7a;">—</span>
<div class="a" style="left:2138px;top:1190px;width:70px;height:44px;box-sizing:border-box;border:2px solid #dcdcdc;border-radius:8px;background:#f0f0f0"></div>
<span class="t" style="left:2148.00px;top:1203.94px;font-size:20.9px;color:#747ea2;font-family:'Liberation Mono',monospace;letter-spacing:-0.475px;">1924</span>
<span class="t" style="left:627.58px;top:1296.38px;font-size:29.26px;color:#2d2d2d;font-weight:700;letter-spacing:-0.154px;">greeting</span>
<span class="t" style="left:628.75px;top:1340.25px;font-size:27.17px;color:#7a7a7a;letter-spacing:0.238px;-webkit-text-stroke:0.25px;">some description</span>
<div class="a" style="left:1279px;top:1309px;width:99px;height:44px;box-sizing:border-box;border:2px solid #dcdcdc;border-radius:8px;background:#f0f0f0"></div>
<span class="t" style="left:1289.12px;top:1321.25px;font-size:20.9px;color:#747ea2;letter-spacing:0.200px;-webkit-text-stroke:0.8px #747ea2;">STRING</span>
<span class="t" style="left:1985.65px;top:1319.96px;font-size:21.9px;color:#7a7a7a;-webkit-text-stroke:1.3px #7a7a7a;">—</span>
<svg class="a" style="left:2242px;top:1307.5px" width="48" height="48" viewBox="0 0 24 24" fill="#747ea2" ><circle cx="6" cy="12" r="2"/><circle cx="12" cy="12" r="2"/><circle cx="18" cy="12" r="2"/></svg>
<div class="a" style="left:1471px;top:1317px;width:154px;height:44px;box-sizing:border-box;border:2px solid #fae293;border-radius:8px;background:#fefae8"></div>
<span class="t" style="left:1487.50px;top:1325.91px;font-size:25.08px;color:#c9882b;letter-spacing:0.444px;-webkit-text-stroke:0.25px;">#greetings</span>
<span class="t" style="left:2185.15px;top:1320.55px;font-size:21.2px;color:#7a7a7a;-webkit-text-stroke:1.3px #7a7a7a;">—</span>
<span class="t" style="left:627.58px;top:1414.88px;font-size:29.26px;color:#2d2d2d;font-weight:700;letter-spacing:-0.305px;">greeting_counter</span>
<span class="t" style="left:628.12px;top:1458.75px;font-size:27.17px;color:#7a7a7a;letter-spacing:0.165px;-webkit-text-stroke:0.25px;">Counts number of greetings</span>
<div class="a" style="left:1279px;top:1427px;width:119px;height:44px;box-sizing:border-box;border:2px solid #dcdcdc;border-radius:8px;background:#f0f0f0"></div>
<span class="t" style="left:1288.38px;top:1439.75px;font-size:20.9px;color:#747ea2;letter-spacing:0.229px;-webkit-text-stroke:0.8px #747ea2;">NUMERIC</span>
<span class="t" style="left:1985.65px;top:1438.46px;font-size:21.9px;color:#7a7a7a;-webkit-text-stroke:1.3px #7a7a7a;">—</span>
<svg class="a" style="left:2242px;top:1426px" width="48" height="48" viewBox="0 0 24 24" fill="#747ea2" ><circle cx="6" cy="12" r="2"/><circle cx="12" cy="12" r="2"/><circle cx="18" cy="12" r="2"/></svg>
<span class="t" style="left:1472.65px;top:1438.63px;font-size:21.7px;color:#7a7a7a;-webkit-text-stroke:1.3px #7a7a7a;">—</span>
<span class="t" style="left:2185.15px;top:1439.05px;font-size:21.2px;color:#7a7a7a;-webkit-text-stroke:1.3px #7a7a7a;">—</span>
</section>
</main>
<div class="a" style="left:700px;top:1532px;width:1660px;height:120px;border-radius:40px;box-shadow:0 0 80px rgba(0,0,0,0.36)"></div>
<svg class="a" style="left:0;top:1492px" width="20" height="20" viewBox="0 0 20 20"><path d="M0 0A20 20 0 0 0 20 20H0z" fill="#000"/></svg>
</div></body></html>
